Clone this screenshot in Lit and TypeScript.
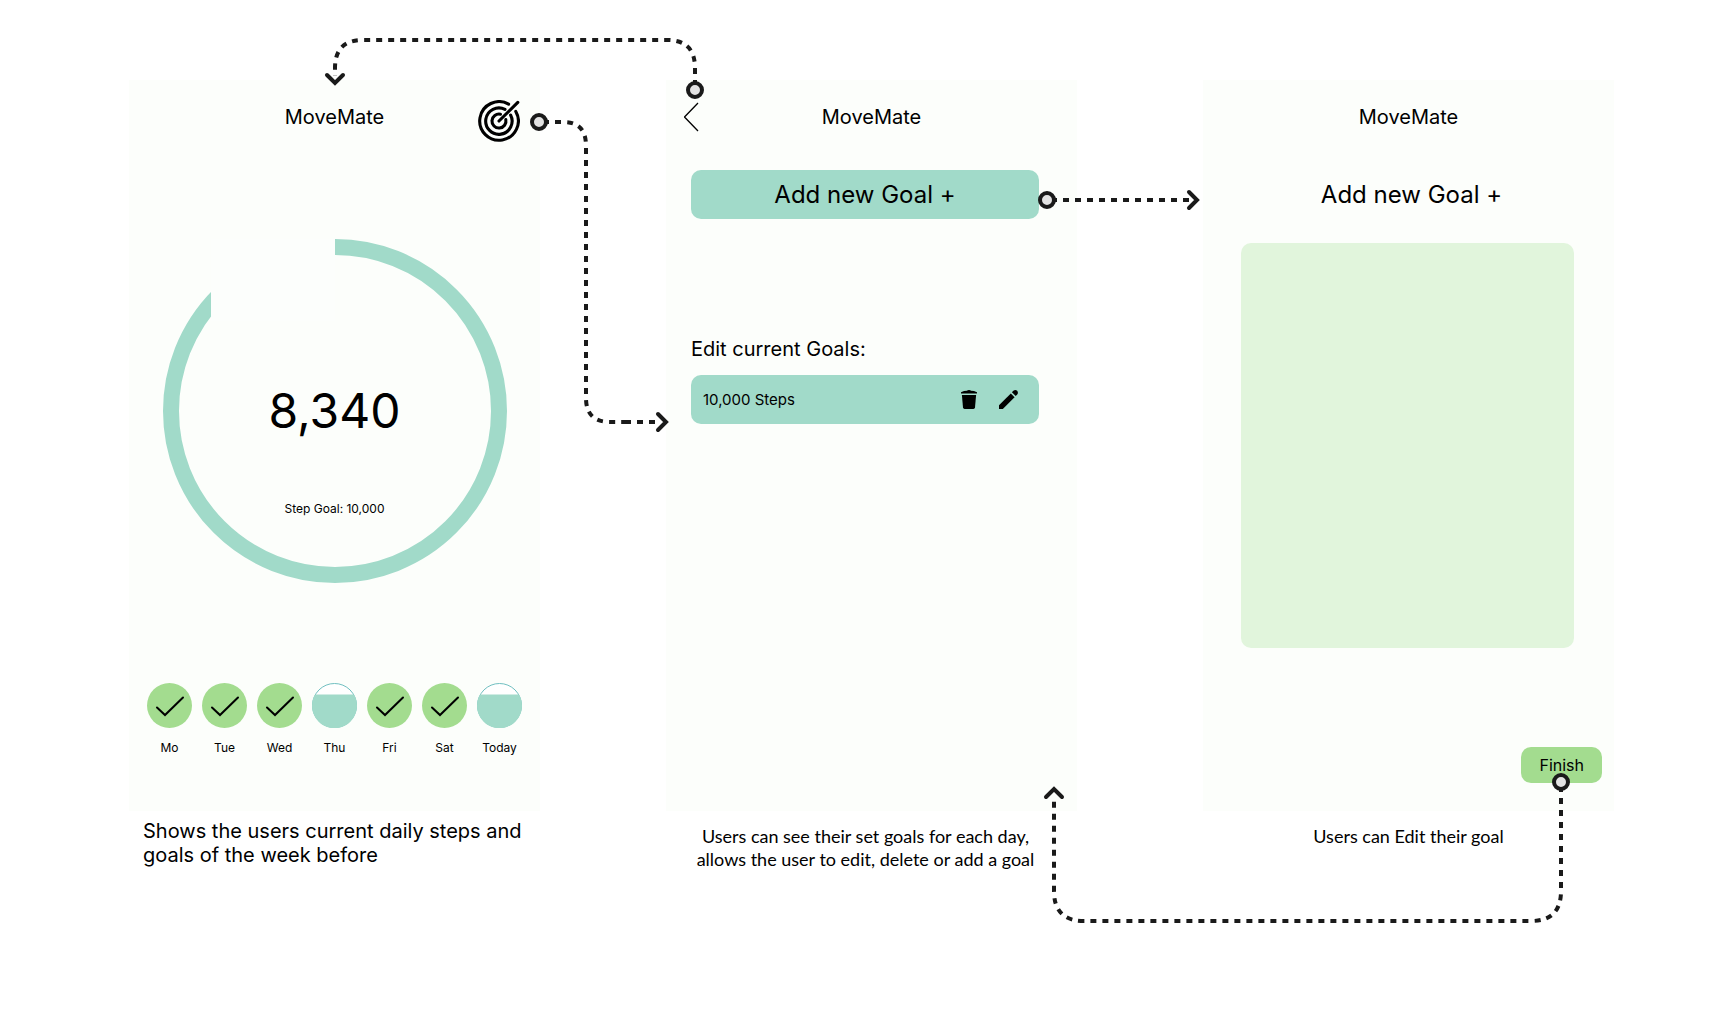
import { LitElement, html, svg, css } from "lit";
import { customElement, property, state } from "lit/decorators.js";

interface Day {
  label: string;
  done: boolean;
}

interface Connector {
  start: [number, number];
  path: string;
  head: string;
}

const DAYS: Day[] = [
  { label: "Mo", done: true },
  { label: "Tue", done: true },
  { label: "Wed", done: true },
  { label: "Thu", done: false },
  { label: "Fri", done: true },
  { label: "Sat", done: true },
  { label: "Today", done: false },
];

// Horizontal measures of the board grid; the connectors are routed from them.
const PAD_LEFT = 129;
const PAD_RIGHT = 120;
const GAP = 126;

@customElement("step-ring")
export class StepRing extends LitElement {
  @property() steps = "";
  @property() goal = "";

  static styles = css`
    :host {
      display: grid;
      justify-items: center;
    }
    .ring,
    .figures {
      grid-area: 1 / 1;
    }
    .ring {
      width: 344px;
      height: 344px;
    }
    .figures {
      display: flex;
      flex-direction: column;
      align-items: center;
      gap: 61px;
      padding-top: 143px;
    }
    .steps {
      margin: 0;
      font-size: 48px;
      line-height: 58px;
    }
    .goal {
      margin: 0;
      font-size: 12px;
      line-height: 15px;
    }
  `;

  render() {
    return html`
      <svg class="ring" viewBox="0 0 344 344" aria-hidden="true">
        <circle cx="172" cy="172" r="164" fill="none" stroke="#a1dac9" stroke-width="16" />
        <rect x="48" y="-40" width="124" height="122" fill="#fcfefc" />
      </svg>
      <div class="figures">
        <p class="steps">${this.steps}</p>
        <p class="goal">Step Goal: ${this.goal}</p>
      </div>
    `;
  }
}

@customElement("day-mark")
export class DayMark extends LitElement {
  @property() label = "";
  @property({ type: Boolean }) done = false;

  static styles = css`
    :host {
      display: flex;
      flex-direction: column;
      align-items: center;
      gap: 12px;
      width: 45px;
    }
    .dot {
      display: block;
      width: 45px;
      height: 45px;
    }
    .label {
      font-size: 12px;
      line-height: 15px;
    }
  `;

  render() {
    return html`
      <svg class="dot" viewBox="0 0 45 45" aria-hidden="true">
        ${this.done
          ? svg`
              <circle cx="22.5" cy="22.5" r="22.5" fill="#a3dc8f" />
              <path d="M10 24.5 L18 32 L36 14.5" fill="none" stroke="#000" stroke-width="2" stroke-linecap="round" />
            `
          : svg`
              <circle cx="22.5" cy="22.5" r="22" fill="#fff" stroke="#70bfc0" />
              <path d="M3 11.5 H42 A22.5 22.5 0 1 1 3 11.5 Z" fill="#a1dac9" />
            `}
      </svg>
      <span class="label">${this.label}</span>
    `;
  }
}

@customElement("app-root")
export class AppRoot extends LitElement {
  @state() private width = window.innerWidth;
  private observer?: ResizeObserver;

  static styles = css`
    :host {
      display: block;
      position: relative;
      box-sizing: border-box;
      min-height: 100vh;
      background: #fff;
      color: #000;
      font-family: Inter, "Liberation Sans", sans-serif;
      font-size: 20px;
      line-height: 24px;
    }
    .flow {
      display: grid;
      grid-template-columns: repeat(3, minmax(0, 1fr));
      grid-template-rows: auto auto;
      column-gap: 126px;
      padding: 80px 120px 140px 129px;
    }
    .step {
      display: grid;
      grid-row: span 2;
      grid-template-rows: subgrid;
      margin: 0;
    }
    .board {
      display: flex;
      flex-direction: column;
      background: #fcfefb;
      padding: 20px 0 56px;
    }
    .bar {
      display: grid;
      grid-template-columns: 1fr auto 1fr;
      align-items: start;
      height: 44px;
      padding: 0 18px;
    }
    .title {
      grid-column: 2;
      margin: 5px 0 0;
      font-size: 20px;
      font-weight: 400;
      line-height: 24px;
    }
    button {
      border: 0;
      margin: 0;
      padding: 0;
      background: none;
      color: inherit;
      font: inherit;
      cursor: pointer;
    }
    svg {
      display: block;
    }
    .back {
      grid-area: 1 / 1;
      justify-self: start;
    }
    .target {
      grid-area: 1 / 3;
      justify-self: end;
      padding-right: 2px;
    }
    .progress {
      margin-top: 95px;
    }
    .week {
      display: flex;
      justify-content: space-between;
      margin-top: 100px;
      padding: 0 18px;
    }
    .goals {
      display: flex;
      flex-direction: column;
      padding: 26px 38px 0 25px;
    }
    .add {
      padding: 10px;
      border-radius: 10px;
      background: #a1dac9;
      font-size: 24px;
      line-height: 29px;
    }
    .subhead {
      margin: 118px 0 14px;
      font-size: 20px;
      font-weight: 400;
      line-height: 24px;
    }
    .goal {
      display: flex;
      align-items: center;
      gap: 18px;
      height: 49px;
      padding: 0 19px 0 12px;
      border-radius: 10px;
      background: #a1dac9;
    }
    .name {
      flex: 1;
      font-size: 15px;
      line-height: 18px;
    }
    .heading {
      margin: 36px 0 34px;
      padding-left: 6px;
      font-size: 24px;
      font-weight: 400;
      line-height: 29px;
      text-align: center;
    }
    .form {
      height: 405px;
      margin: 0 40px 0 38px;
      border-radius: 10px;
      background: #e1f5dc;
    }
    .finish {
      align-self: flex-end;
      margin: 99px 12px 0 0;
      padding: 8px 18px;
      border-radius: 10px;
      background: #a3dc8f;
      font-size: 16px;
      line-height: 20px;
    }
    .editor {
      padding-bottom: 28px;
    }
    .caption {
      padding: 8px 14px 0;
    }
    .note {
      padding: 14px 42px 0 30px;
      font-family: Lato, "Open Sans", sans-serif;
      font-size: 18px;
      line-height: 23px;
      text-align: center;
    }
    .short {
      padding: 14px 30px 0;
    }
    .links {
      position: absolute;
      inset: 0;
      width: 100%;
      height: 100%;
      pointer-events: none;
    }
  `;

  connectedCallback() {
    super.connectedCallback();
    this.observer = new ResizeObserver(() => {
      this.width = this.clientWidth;
    });
    this.observer.observe(this);
  }

  disconnectedCallback() {
    this.observer?.disconnect();
    super.disconnectedCallback();
  }

  private get connectors(): Connector[] {
    const w = (this.width - PAD_LEFT - PAD_RIGHT - 2 * GAP) / 3;
    const left = (i: number) => PAD_LEFT + i * (w + GAP);
    const right = (i: number) => left(i) + w;
    const r = Math.round;

    const backX = r(left(1) + 29);
    const homeX = r(left(0) + w / 2);
    const targetX = r(right(0) - 1);
    const turnX = r(right(0) + 46);
    const goalsX = r(left(1) + 1);
    const addX = r(right(1) - 30);
    const editorX = r(left(2) - 5);
    const finishX = r(right(2) - 53);
    const returnX = r(right(1) - 23);

    return [
      {
        start: [backX, 90],
        path: `M${backX} 90 V68 Q${backX} 40 ${backX - 28} 40 H${homeX + 28} Q${homeX} 40 ${homeX} 68 V76`,
        head: `M${homeX - 8} 75 L${homeX} 83 L${homeX + 8} 75`,
      },
      {
        start: [targetX, 122],
        path: `M${targetX} 122 H${turnX - 22} Q${turnX} 122 ${turnX} 146 V398 Q${turnX} 422 ${turnX + 24} 422 H${goalsX - 38} M${goalsX - 46} 422 H${goalsX - 6}`,
        head: `M${goalsX - 9} 414 L${goalsX - 1} 422 L${goalsX - 9} 430`,
      },
      {
        start: [addX, 200],
        path: `M${addX} 200 H${editorX - 4}`,
        head: `M${editorX - 9} 192 L${editorX - 1} 200 L${editorX - 9} 208`,
      },
      {
        start: [finishX, 782],
        path: `M${finishX} 782 V891 Q${finishX} 921 ${finishX - 30} 921 H${returnX + 30} Q${returnX} 921 ${returnX} 891 V796`,
        head: `M${returnX - 8} 797 L${returnX} 789 L${returnX + 8} 797`,
      },
    ];
  }

  private renderLinks() {
    return html`
      <svg class="links" aria-hidden="true">
        ${this.connectors.map(
          (c) => svg`
            <g fill="none" stroke="#1a1a1a" stroke-width="4">
              <path d=${c.path} stroke-dasharray="6 6" stroke-dashoffset="-4" />
              <path d=${c.head} stroke-linecap="round" />
              <circle cx=${c.start[0]} cy=${c.start[1]} r="7" fill="#e3e3e3" />
            </g>
          `
        )}
      </svg>
    `;
  }

  render() {
    return html`
      <main class="flow">
        <figure class="step">
          <section class="board">
            <header class="bar">
              <h1 class="title">MoveMate</h1>
              <button class="target" type="button" aria-label="Goals">
                <svg width="42" height="42" viewBox="0 0 42 42" fill="none" stroke="#000" stroke-width="3.1" stroke-linecap="round">
                  <path d="M30.6 4.2 A19.3 19.3 0 1 0 37.8 11.4" />
                  <path d="M27 9.4 A13.2 13.2 0 1 0 32.6 15" />
                  <path d="M22.5 14.2 A7 7 0 1 0 27.8 19.5" />
                  <path d="M21 21 L39.8 2.4" />
                </svg>
              </button>
            </header>
            <step-ring class="progress" steps="8,340" goal="10,000"></step-ring>
            <div class="week">
              ${DAYS.map((d) => html`<day-mark label=${d.label} ?done=${d.done}></day-mark>`)}
            </div>
          </section>
          <figcaption class="caption">Shows the users current daily steps and goals of the week before</figcaption>
        </figure>

        <figure class="step">
          <section class="board">
            <header class="bar">
              <button class="back" type="button" aria-label="Back">
                <svg width="16" height="34" viewBox="0 0 16 34" fill="none" stroke="#000" stroke-width="1.3">
                  <path d="M14 3 L0.5 17 L14 31" />
                </svg>
              </button>
              <h2 class="title">MoveMate</h2>
            </header>
            <div class="goals">
              <button class="add" type="button">Add new Goal +</button>
              <h3 class="subhead">Edit current Goals:</h3>
              <div class="goal">
                <span class="name">10,000 Steps</span>
                <button type="button" aria-label="Delete goal">
                  <svg width="22" height="22" viewBox="0 0 22 22">
                    <path d="M3 3.2 Q6 1.8 9 1.8 Q9.4 1 11 1 Q12.6 1 13 1.8 Q16 1.8 19 3.2 V4.6 H3 Z" />
                    <path d="M3.9 6 H18.1 L17 18.6 Q16.8 20 15.4 20 H6.6 Q5.2 20 5 18.6 Z" />
                  </svg>
                </button>
                <button type="button" aria-label="Edit goal">
                  <svg width="22" height="22" viewBox="0 0 22 22">
                    <path d="M1 20 V16.2 L12.8 4.4 L16.6 8.2 L4.8 20 Z" />
                    <path d="M13.9 3.3 L15.4 1.8 Q17.3 0.4 19.2 1.8 Q20.6 3.7 19.2 5.6 L17.7 7.1 Z" />
                  </svg>
                </button>
              </div>
            </div>
          </section>
          <figcaption class="note">
            Users can see their set goals for each day, allows the user to edit, delete or add a goal
          </figcaption>
        </figure>

        <figure class="step">
          <section class="board editor">
            <header class="bar">
              <h2 class="title">MoveMate</h2>
            </header>
            <h3 class="heading">Add new Goal +</h3>
            <div class="form"></div>
            <button class="finish" type="button">Finish</button>
          </section>
          <figcaption class="note short">Users can Edit their goal</figcaption>
        </figure>
      </main>
      ${this.renderLinks()}
    `;
  }
}
